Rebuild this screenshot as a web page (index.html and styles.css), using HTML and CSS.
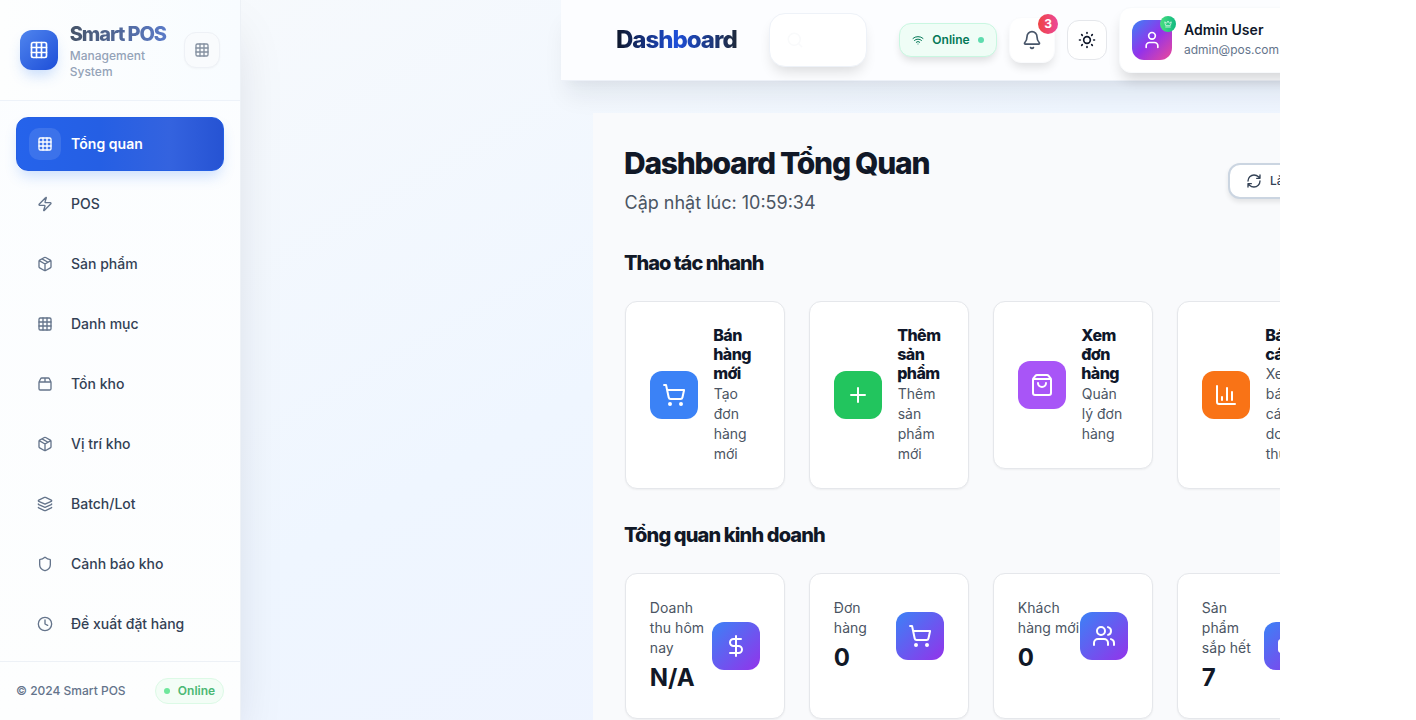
FILE: index.html
```html
<!DOCTYPE html>
<html lang="vi">
<head>
<meta charset="utf-8">
<title>Smart POS</title>
<link rel="stylesheet" href="styles.css">
</head>
<body>
<svg class="sprite" aria-hidden="true">
  <symbol id="grid" viewBox="0 0 24 24"><rect x="3" y="3" width="18" height="18" rx="2"/><path d="M3 9h18M3 15h18M9 3v18M15 3v18"/></symbol>
  <symbol id="zap" viewBox="0 0 24 24"><path d="M4 14a1 1 0 0 1-.78-1.63l9.9-10.2a.5.5 0 0 1 .86.46l-1.92 6.02A1 1 0 0 0 13 10h7a1 1 0 0 1 .78 1.63l-9.9 10.2a.5.5 0 0 1-.86-.46l1.92-6.02A1 1 0 0 0 11 14z"/></symbol>
  <symbol id="box" viewBox="0 0 24 24"><path d="M11 21.73a2 2 0 0 0 2 0l7-4A2 2 0 0 0 21 16V8a2 2 0 0 0-1-1.73l-7-4a2 2 0 0 0-2 0l-7 4A2 2 0 0 0 3 8v8a2 2 0 0 0 1 1.73zM12 22V12M3.3 7 12 12l8.7-5M7.5 4.27l9 5.15"/></symbol>
  <symbol id="package" viewBox="0 0 24 24"><path d="M12 3v6M16.76 3a2 2 0 0 1 1.8 1.1l2.23 4.479a2 2 0 0 1 .21.891V19a2 2 0 0 1-2 2H5a2 2 0 0 1-2-2V9.472a2 2 0 0 1 .211-.894L5.45 4.1A2 2 0 0 1 7.24 3zM3.054 9.013h17.893"/></symbol>
  <symbol id="layers" viewBox="0 0 24 24"><path d="M12.83 2.18a2 2 0 0 0-1.66 0L2.6 6.08a1 1 0 0 0 0 1.83l8.58 3.91a2 2 0 0 0 1.66 0l8.58-3.9a1 1 0 0 0 0-1.83zM2 12a1 1 0 0 0 .58.91l8.6 3.91a2 2 0 0 0 1.65 0l8.58-3.9A1 1 0 0 0 22 12M2 17a1 1 0 0 0 .58.91l8.6 3.91a2 2 0 0 0 1.65 0l8.58-3.9A1 1 0 0 0 22 17"/></symbol>
  <symbol id="shield" viewBox="0 0 24 24"><path d="M20 13c0 5-3.5 7.5-7.66 8.95a1 1 0 0 1-.67-.01C7.5 20.5 4 18 4 13V6a1 1 0 0 1 1-1c2 0 4.5-1.2 6.24-2.72a1.17 1.17 0 0 1 1.52 0C14.51 3.81 17 5 19 5a1 1 0 0 1 1 1z"/></symbol>
  <symbol id="clock" viewBox="0 0 24 24"><circle cx="12" cy="12" r="10"/><path d="M12 6v6l4 2"/></symbol>
  <symbol id="search" viewBox="0 0 24 24"><circle cx="11" cy="11" r="8"/><path d="m21 21-4.3-4.3"/></symbol>
  <symbol id="wifi" viewBox="0 0 24 24"><path d="M12 20h.01M2 8.82a15 15 0 0 1 20 0M5 12.859a10 10 0 0 1 14 0M8.5 16.429a5 5 0 0 1 7 0"/></symbol>
  <symbol id="bell" viewBox="0 0 24 24"><path d="M10.268 21a2 2 0 0 0 3.464 0M3.262 15.326A1 1 0 0 0 4 17h16a1 1 0 0 0 .74-1.673C19.41 13.956 18 12.499 18 8A6 6 0 0 0 6 8c0 4.499-1.411 5.956-2.738 7.326"/></symbol>
  <symbol id="sun" viewBox="0 0 24 24"><circle cx="12" cy="12" r="4"/><path d="M12 3v1M12 20v1M3 12h1M20 12h1M18.364 5.636l-.707.707M6.343 17.657l-.707.707M5.636 5.636l.707.707M17.657 17.657l.707.707"/></symbol>
  <symbol id="user" viewBox="0 0 24 24"><path d="M19 21v-2a4 4 0 0 0-4-4H9a4 4 0 0 0-4 4v2"/><circle cx="12" cy="7" r="4"/></symbol>
  <symbol id="crown" viewBox="0 0 24 24"><path d="M11.562 3.266a.5.5 0 0 1 .876 0L15.39 8.87a1 1 0 0 0 1.516.294L21.183 5.5a.5.5 0 0 1 .798.519l-2.834 10.246a1 1 0 0 1-.956.734H5.81a1 1 0 0 1-.957-.734L2.02 6.02a.5.5 0 0 1 .798-.519l4.276 3.664a1 1 0 0 0 1.516-.294zM5 21h14"/></symbol>
  <symbol id="refresh" viewBox="0 0 24 24"><path d="M3 12a9 9 0 0 1 9-9 9.75 9.75 0 0 1 6.74 2.74L21 8M21 3v5h-5M21 12a9 9 0 0 1-9 9 9.75 9.75 0 0 1-6.74-2.74L3 16M8 16H3v5"/></symbol>
  <symbol id="cart" viewBox="0 0 24 24"><circle cx="8" cy="21" r="1"/><circle cx="19" cy="21" r="1"/><path d="M2.05 2.05h2l2.66 12.42a2 2 0 0 0 2 1.58h9.78a2 2 0 0 0 1.95-1.57l1.65-7.43H5.12"/></symbol>
  <symbol id="plus" viewBox="0 0 24 24"><path d="M5 12h14M12 5v14"/></symbol>
  <symbol id="bag" viewBox="0 0 24 24"><path d="M16 10a4 4 0 0 1-8 0M3.103 6.034h17.794M3.4 5.467a2 2 0 0 0-.4 1.2V20a2 2 0 0 0 2 2h14a2 2 0 0 0 2-2V6.667a2 2 0 0 0-.4-1.2l-2-2.667A2 2 0 0 0 17 2H7a2 2 0 0 0-1.6.8z"/></symbol>
  <symbol id="chart" viewBox="0 0 24 24"><path d="M3 3v16a2 2 0 0 0 2 2h16M18 17V9M13 17V5M8 17v-3"/></symbol>
  <symbol id="dollar" viewBox="0 0 24 24"><path d="M12 2v20M17 5H9.500a3.500 3.500 0 0 0 0 7h5a3.500 3.500 0 0 1 0 7H6"/></symbol>
  <symbol id="users" viewBox="0 0 24 24"><path d="M16 21v-2a4 4 0 0 0-4-4H6a4 4 0 0 0-4 4v2M16 3.128a4 4 0 0 1 0 7.744M22 21v-2a4 4 0 0 0-3-3.870"/><circle cx="9" cy="7" r="4"/></symbol>
</svg>
<div class="app">
  <aside class="sidebar">
    <div class="brand">
      <div class="brand-logo"><svg class="i20"><use href="#grid"/></svg></div>
      <div class="brand-text">
        <div class="brand-name">Smart POS</div>
        <div class="brand-sub">Management System</div>
      </div>
      <button class="collapse"><svg class="i16"><use href="#grid"/></svg></button>
    </div>
    <nav class="nav">
      <a class="nav-item active"><span class="nav-icon"><svg class="i16"><use href="#grid"/></svg></span>Tổng quan</a>
      <a class="nav-item"><span class="nav-icon"><svg class="i16"><use href="#zap"/></svg></span>POS</a>
      <a class="nav-item"><span class="nav-icon"><svg class="i16"><use href="#box"/></svg></span>Sản phẩm</a>
      <a class="nav-item"><span class="nav-icon"><svg class="i16"><use href="#grid"/></svg></span>Danh mục</a>
      <a class="nav-item"><span class="nav-icon"><svg class="i16"><use href="#package"/></svg></span>Tồn kho</a>
      <a class="nav-item"><span class="nav-icon"><svg class="i16"><use href="#box"/></svg></span>Vị trí kho</a>
      <a class="nav-item"><span class="nav-icon"><svg class="i16"><use href="#layers"/></svg></span>Batch/Lot</a>
      <a class="nav-item"><span class="nav-icon"><svg class="i16"><use href="#shield"/></svg></span>Cảnh báo kho</a>
      <a class="nav-item"><span class="nav-icon"><svg class="i16"><use href="#clock"/></svg></span>Đề xuất đặt hàng</a>
    </nav>
    <div class="side-foot"><span>© 2024 Smart POS</span><span class="side-status"><i></i>Online</span></div>
  </aside>
  <div class="page">
    <header class="topbar">
      <div class="topbar-title">Dashboard</div>
      <div class="search"><svg class="i18"><use href="#search"/></svg></div>
      <div class="actions">
        <div class="status"><svg class="i12"><use href="#wifi"/></svg>Online<i></i></div>
        <button class="bell"><svg class="i20"><use href="#bell"/></svg><span class="count">3</span></button>
        <button class="theme"><svg class="i20"><use href="#sun"/></svg></button>
        <div class="profile">
          <div class="avatar"><svg class="i20"><use href="#user"/></svg><span class="crown"><svg><use href="#crown"/></svg></span></div>
          <div><div class="profile-name">Admin User</div><div class="profile-mail">admin@pos.com</div></div>
        </div>
      </div>
    </header>
    <main class="content">
      <div class="head">
        <div><h1>Dashboard Tổng Quan</h1><p class="updated">Cập nhật lúc: 10:59:34</p></div>
        <button class="reload"><svg class="i16"><use href="#refresh"/></svg>Làm mới</button>
      </div>
      <h2 class="h-quick">Thao tác nhanh</h2>
      <div class="cards quick">
        <div class="card"><div class="tile blue"><svg class="i24"><use href="#cart"/></svg></div><div class="quick-text"><h3>Bán hàng mới</h3><p>Tạo đơn hàng mới</p></div></div>
        <div class="card"><div class="tile green"><svg class="i24"><use href="#plus"/></svg></div><div class="quick-text"><h3>Thêm sản phẩm</h3><p>Thêm sản phẩm mới</p></div></div>
        <div class="card"><div class="tile purple"><svg class="i24"><use href="#bag"/></svg></div><div class="quick-text"><h3>Xem đơn hàng</h3><p>Quản lý đơn hàng</p></div></div>
        <div class="card"><div class="tile orange"><svg class="i24"><use href="#chart"/></svg></div><div class="quick-text"><h3>Báo cáo</h3><p>Xem báo cáo doanh thu</p></div></div>
      </div>
      <h2 class="h-stats">Tổng quan kinh doanh</h2>
      <div class="cards stats">
        <div class="card"><div class="stat"><div class="stat-text"><p>Doanh<br>thu hôm<br>nay</p><b>N/A</b></div><div class="tile mix"><svg class="i24"><use href="#dollar"/></svg></div></div></div>
        <div class="card"><div class="stat"><div class="stat-text"><p>Đơn<br>hàng</p><b>0</b></div><div class="tile mix"><svg class="i24"><use href="#cart"/></svg></div></div></div>
        <div class="card"><div class="stat"><div class="stat-text"><p>Khách<br>hàng mới</p><b>0</b></div><div class="tile mix"><svg class="i24"><use href="#users"/></svg></div></div></div>
        <div class="card"><div class="stat"><div class="stat-text"><p>Sản<br>phẩm<br>sắp hết</p><b>7</b></div><div class="tile mix"><svg class="i24"><use href="#box"/></svg></div></div></div>
      </div>
    </main>
  </div>
</div>
</body>
</html>
```
FILE: styles.css
```css
* { box-sizing: border-box; }
body { margin: 0; background: #fff; font-family: Inter, "Liberation Sans", sans-serif; color: #0f172a; overflow: hidden; }
h1, h2, h3, p { margin: 0; }
button { font: inherit; padding: 0; }
svg { fill: none; stroke: currentColor; stroke-width: 2; stroke-linecap: round; stroke-linejoin: round; flex: none; display: block; }
.sprite { display: none; }
.i12 { width: 12px; height: 12px; }
.i16 { width: 16px; height: 16px; }
.i18 { width: 18px; height: 18px; }
.i20 { width: 20px; height: 20px; }
.i24 { width: 24px; height: 24px; }

.app { width: 1280px; height: 720px; overflow: hidden; display: flex; background: linear-gradient(to bottom right, #f8fafc, #eff6ff 50%, #eef2ff); }

.sidebar { width: 241px; flex: none; display: flex; flex-direction: column; border-right: 1px solid #edf1f6; background: linear-gradient(#fbfdff, #fdfefe); box-shadow: 0 25px 50px -12px rgba(15,23,42,.15); }
.brand { height: 101px; display: flex; align-items: center; padding: 0 20px; border-bottom: 1px solid #edf2f9; background: linear-gradient(90deg, #fdfefe, #f8fcff); }
.brand-logo { width: 38px; height: 40px; border-radius: 12px; display: grid; place-items: center; color: #fff; background: linear-gradient(135deg, #5085ee, #1d4ed8); box-shadow: 0 8px 14px -3px rgba(59,130,246,.28); }
.brand-text { width: 115px; margin-left: 12px; }
.brand-name { font-size: 20px; line-height: 28px; font-weight: 800; letter-spacing: -1.1px; white-space: nowrap; width: 98px; background: linear-gradient(90deg, #475569, #5b7bc9); background-clip: text; color: transparent; margin-top: -1px; }
.brand-sub { font-size: 12px; line-height: 16px; font-weight: 500; color: #94a3b8; width: 90px; }
.collapse { width: 36px; height: 36px; flex: none; border-radius: 12px; border: 1px solid #eef1f6; background: #f9fbfd; display: grid; place-items: center; color: #8490a0; box-shadow: 0 1px 2px rgba(0,0,0,.03); }
.nav { padding: 16px; display: flex; flex-direction: column; gap: 6px; height: 560px; }
.nav-item { height: 54px; flex: none; border-radius: 12px; padding: 0 13px; display: flex; align-items: center; gap: 10px; font-size: 14px; line-height: 20px; font-weight: 500; color: #334155; }
.nav-icon { width: 32px; height: 32px; border-radius: 10px; display: grid; place-items: center; color: #64748b; }
.active { font-weight: 600; letter-spacing: .06px; color: #fff; background: linear-gradient(90deg, #2563eb, #255fe4 40%, #3463df 74%, #2653d3); border: 1px solid #2560e4; padding: 0 12px; box-shadow: 0 8px 14px -3px rgba(59,130,246,.25); }
.active .nav-icon { color: #fff; background: rgba(255,255,255,.11); }
.side-foot { height: 59px; border-top: 1px solid #edf1f6; padding: 0 16px; display: flex; align-items: center; justify-content: space-between; font-size: 12px; line-height: 16px; font-weight: 500; color: #64748b; }
.side-status { width: 69px; height: 26px; display: flex; align-items: center; justify-content: center; gap: 8px; border: 1px solid #dcfae6; border-radius: 13px; background: #f3fdf6; color: #4bb874; font-weight: 600; }
.side-status i { width: 6px; height: 6px; border-radius: 50%; background: #6ee79b; }

.page { flex: none; width: 1040px; margin-left: 320px; }
.topbar { height: 81px; border-bottom: 1px solid #edf1f8; background: #fcfdff; display: flex; align-items: center; padding-left: 55px; box-shadow: 0 20px 25px -5px rgba(15,23,42,.07), 0 8px 10px -6px rgba(15,23,42,.04); }
.topbar-title { font-size: 24px; line-height: 32px; font-weight: 800; letter-spacing: -1px; width: 121px; white-space: nowrap; background: linear-gradient(90deg, #0f172a, #1d4ed8 50%, #1e293b); background-clip: text; color: transparent; }
.search { width: 98px; height: 54px; margin: 0 32px; flex: none; border: 1px solid #eef2f8; border-radius: 16px; background: #fff; box-shadow: 0 8px 14px -4px rgba(0,0,0,.14); padding: 17px 16px; color: #f9fafb; }
.actions { display: flex; align-items: center; gap: 12px; }
.status { width: 98px; height: 34px; border: 1px solid #c9f7e1; border-radius: 12px; background: #effdf6; color: #047857; font-size: 12px; line-height: 16px; font-weight: 600; display: flex; align-items: center; justify-content: center; gap: 8px; box-shadow: 0 5px 8px -2px rgba(0,0,0,.14); }
.status i { width: 6px; height: 6px; border-radius: 50%; background: #5edcae; }
.bell { position: relative; width: 46px; height: 46px; border: 1px solid #fafbfd; border-radius: 12px; background: #fff; color: #475569; display: grid; place-items: center; box-shadow: 0 6px 10px -2px rgba(0,0,0,.12); }
.count { position: absolute; top: -4px; right: -4px; width: 20px; height: 20px; border-radius: 50%; background: linear-gradient(90deg, #ef4444, #ec4899); color: #fff; font-size: 12px; line-height: 20px; font-weight: 700; text-align: center; }
.theme { width: 40px; height: 40px; border: 1px solid #e5e7eb; border-radius: 12px; background: #fff; color: #0f172a; display: grid; place-items: center; }
.profile { width: 230px; height: 66px; border: 1px solid #f8fafc; border-radius: 12px; background: #fff; display: flex; align-items: center; gap: 12px; padding-left: 12px; box-shadow: 0 9px 14px -3px rgba(0,0,0,.16); }
.avatar { position: relative; width: 40px; height: 40px; border-radius: 12px; display: grid; place-items: center; color: #fff; background: linear-gradient(135deg, #3b82f6, #9333ea 50%, #ec4899); }
.crown { position: absolute; top: -4px; right: -4px; width: 16px; height: 16px; border-radius: 50%; display: grid; place-items: center; background: linear-gradient(90deg, #4ade80, #10b981); }
.crown svg { width: 8px; height: 8px; }
.profile-name { font-size: 14px; line-height: 20px; font-weight: 600; margin-top: -2px; letter-spacing: .06px; }
.profile-mail { font-size: 12px; line-height: 18px; color: #64748b; margin-top: 1px; }

.content { margin: 32px 0 0 32px; width: 1000px; height: 640px; padding: 32px; background: #f9fafc; }
.head { display: flex; width: 727px; height: 72px; justify-content: space-between; align-items: center; }
h1 { font-size: 30px; line-height: 36px; font-weight: 800; letter-spacing: -1.260px; margin-left: -1px; white-space: nowrap; color: #111827; }
.updated { margin-top: 8px; font-size: 18px; line-height: 28px; color: #4b5563; font-weight: 400; margin-left: -.5px; }
.reload { width: 124px; height: 36px; flex: none; border: 2px solid #cbd5e1; border-radius: 12px; background: #fff; color: #334155; display: flex; align-items: center; gap: 8px; padding-left: 16px; font-size: 12px; line-height: 16px; font-weight: 500; box-shadow: 0 3px 5px rgba(0,0,0,.09); white-space: nowrap; }
h2 { font-size: 20px; line-height: 28px; font-weight: 800; letter-spacing: -.98px; color: #111827; white-space: nowrap; margin-left: -1px; }
.h-quick { margin-top: 32px; }
.cards { display: grid; grid-template-columns: repeat(4, 160px); column-gap: 24px; margin-top: 24px; }
.quick { align-items: start; height: 188px; }
.card { border: 1px solid #e5e7eb; border-radius: 12px; background: #fff; padding: 24px; box-shadow: 0 1px 2px rgba(0,0,0,.05); }
.quick .card { display: flex; align-items: center; gap: 16px; }
.tile { width: 48px; height: 48px; flex: none; border-radius: 12px; display: grid; place-items: center; color: #fff; }
.blue { background: #3b82f6; }
.green { background: #22c55e; }
.purple { background: #a855f7; }
.orange { background: #f97316; }
.mix { background: linear-gradient(135deg, #3b82f6, #9333ea); }
.quick-text { width: 46px; margin-left: -.3px; }
h3 { font-size: 16px; line-height: 19.2px; font-weight: 800; letter-spacing: -.55px; margin-left: -.5px; }
.quick-text p { font-size: 14px; line-height: 20px; color: #4b5563; }
.h-stats { margin-top: 32px; letter-spacing: -.87px; }
.stat { display: flex; align-items: center; justify-content: space-between; }
.stat-text { width: 62px; white-space: nowrap; }
.stat-text p { font-size: 14px; line-height: 20px; font-weight: 400; color: #4b5563; letter-spacing: .05px; margin-left: -.2px; }
.stat-text b { display: block; margin-top: 4px; font-size: 24px; line-height: 32px; font-weight: 700; color: #111827; margin-left: -.2px; }
```
